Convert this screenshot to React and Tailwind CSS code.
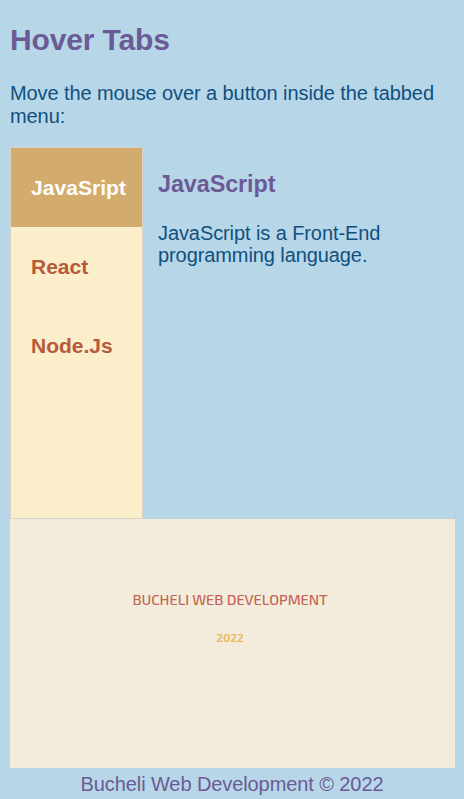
const tabs = ["JavaSript", "React", "Node.Js"];

export default function App() {
  return (
    <div className="h-[799px] overflow-hidden bg-[#b7d6e8] px-[10px] pt-[21px] text-[20px] leading-[23px] tracking-[-0.09px] text-[#10507f] font-['Liberation_Sans',Arial,sans-serif]">
      <h1 className="text-[30px] font-bold leading-[38px] tracking-[-0.15px] text-[#6b5b95]">Hover Tabs</h1>
      <p className="mt-[23px]">Move the mouse over a button inside the tabbed menu:</p>
      <main className="mt-[19px] flex h-[372px] w-[445px]">
        <nav className="flex w-[133px] shrink-0 flex-col border border-[#d8d3c6] bg-[#fbeecb]">
          {tabs.map((tab, i) => (
            <button
              key={tab}
              className={
                i === 0
                  ? "h-[79px] bg-[#d3ab6c] pl-5 text-left text-[21px] font-bold tracking-[0.05px] text-white"
                  : "h-[79px] pl-5 text-left text-[21px] font-bold tracking-normal text-[#b75a3a]"
              }
            >
              {tab}
            </button>
          ))}
        </nav>
        <section className="w-[312px] border border-l-0 border-[#bfcfd8] pl-[15px] pt-[23px]">
          <h2 className="text-[23.4px] font-bold leading-[26px] text-[#6b5b95]">JavaScript</h2>
          <p className="mt-[25px] leading-[22px]">JavaScript is a Front-End programming language.</p>
        </section>
      </main>
      <section className="flex h-[249px] w-[445px] flex-col items-center bg-[#f3ecdd] pr-[5px] pt-[69px] tracking-normal font-['Exo_2','Open_Sans',sans-serif]">
        <p className="text-[14.6px] font-medium leading-[22px] text-[#c36352]">BUCHELI WEB DEVELOPMENT</p>
        <p className="mt-[17px] text-[12px] font-semibold leading-[20px] tracking-[-0.2px] text-[#ecb65b]">2022</p>
      </section>
      <footer className="mt-[5px] text-center text-[#6b5b95]">Bucheli Web Development © 2022</footer>
    </div>
  );
}
